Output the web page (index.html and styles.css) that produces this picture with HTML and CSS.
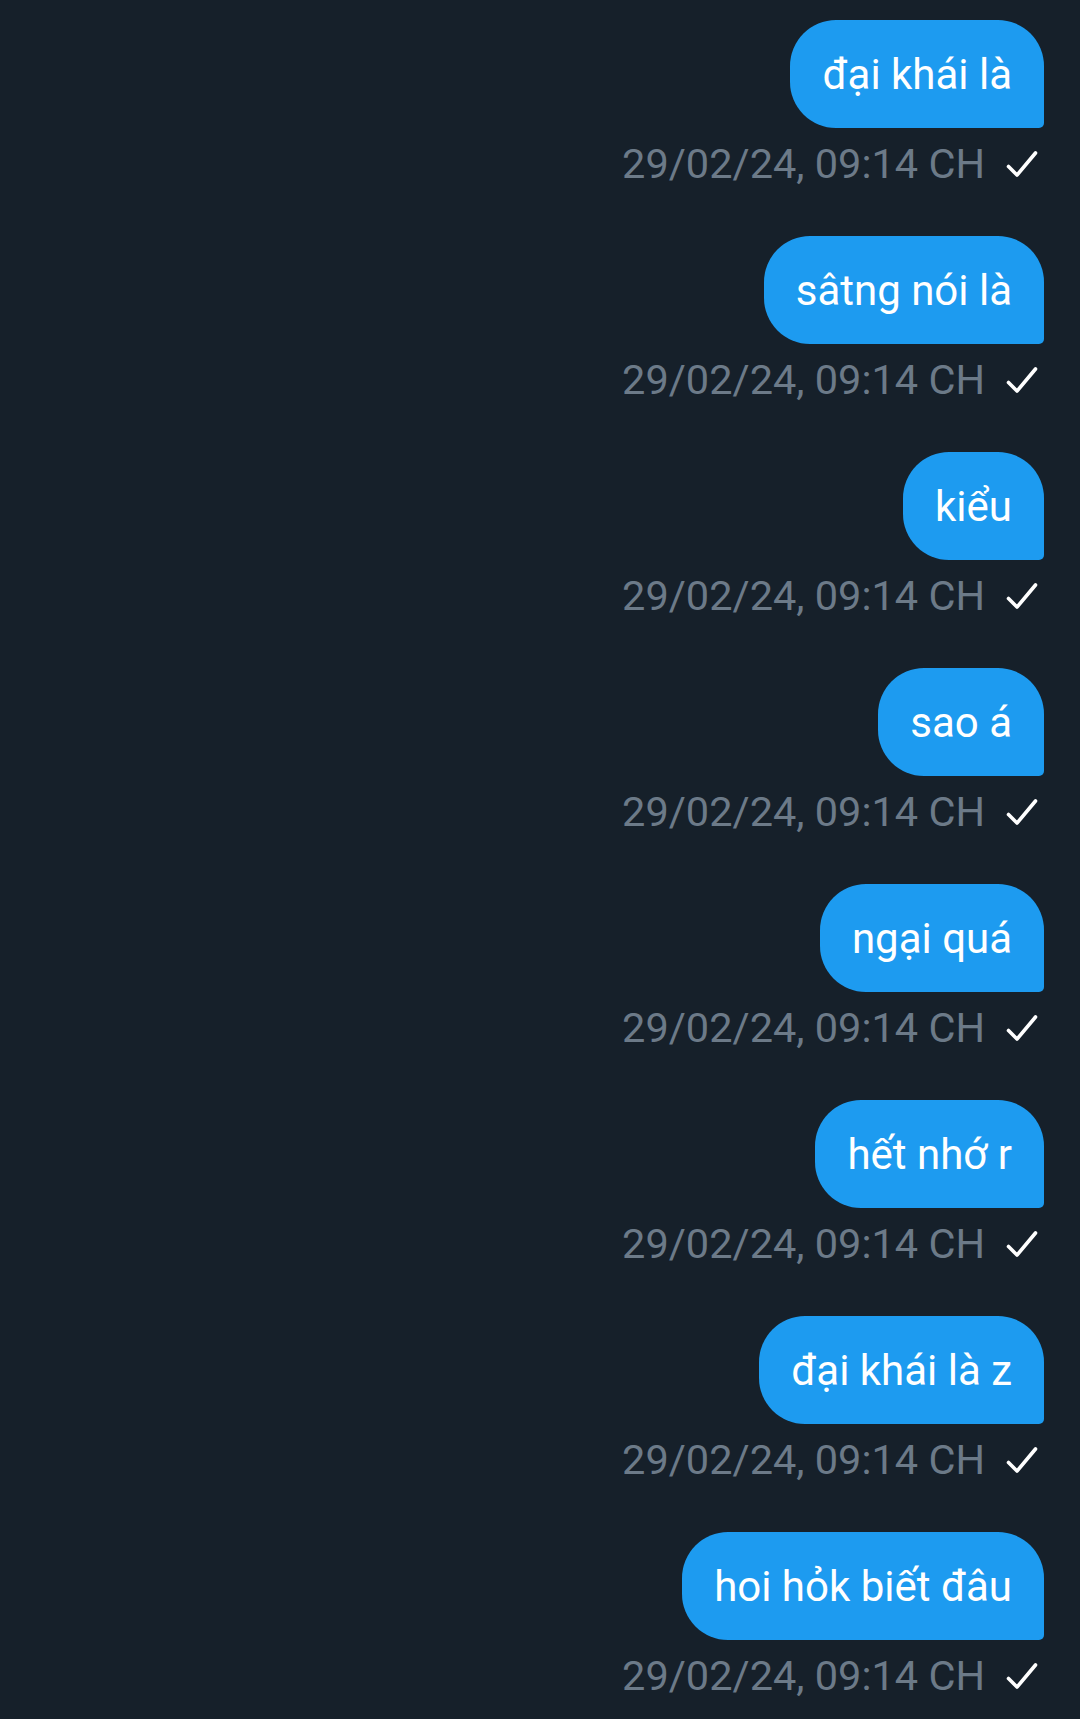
FILE: index.html
```html
<!DOCTYPE html>
<html lang="vi">
<head>
<meta charset="utf-8">
<link rel="stylesheet" href="styles.css">
</head>
<body>
<main class="chat">
  <div class="msg"><div class="bubble">đại khái là</div><div class="meta"><span>29/02/24, 09:14 CH</span><svg class="check" viewBox="0 0 32 28"><path d="M2.5 16.5 L11 25 L29.5 3"/></svg></div></div>
  <div class="msg"><div class="bubble">sâtng nói là</div><div class="meta"><span>29/02/24, 09:14 CH</span><svg class="check" viewBox="0 0 32 28"><path d="M2.5 16.5 L11 25 L29.5 3"/></svg></div></div>
  <div class="msg"><div class="bubble">kiểu</div><div class="meta"><span>29/02/24, 09:14 CH</span><svg class="check" viewBox="0 0 32 28"><path d="M2.5 16.5 L11 25 L29.5 3"/></svg></div></div>
  <div class="msg"><div class="bubble">sao á</div><div class="meta"><span>29/02/24, 09:14 CH</span><svg class="check" viewBox="0 0 32 28"><path d="M2.5 16.5 L11 25 L29.5 3"/></svg></div></div>
  <div class="msg"><div class="bubble">ngại quá</div><div class="meta"><span>29/02/24, 09:14 CH</span><svg class="check" viewBox="0 0 32 28"><path d="M2.5 16.5 L11 25 L29.5 3"/></svg></div></div>
  <div class="msg"><div class="bubble">hết nhớ r</div><div class="meta"><span>29/02/24, 09:14 CH</span><svg class="check" viewBox="0 0 32 28"><path d="M2.5 16.5 L11 25 L29.5 3"/></svg></div></div>
  <div class="msg"><div class="bubble">đại khái là z</div><div class="meta"><span>29/02/24, 09:14 CH</span><svg class="check" viewBox="0 0 32 28"><path d="M2.5 16.5 L11 25 L29.5 3"/></svg></div></div>
  <div class="msg"><div class="bubble">hoi hỏk biết đâu</div><div class="meta"><span>29/02/24, 09:14 CH</span><svg class="check" viewBox="0 0 32 28"><path d="M2.5 16.5 L11 25 L29.5 3"/></svg></div></div>
</main>
</body>
</html>
```
FILE: styles.css
```css
html, body {
  margin: 0;
  padding: 0;
  background: #16202a;
}
body {
  font-family: Roboto, "Noto Sans", sans-serif;
  height: 1719px;
  overflow: hidden;
}
.chat {
  display: flex;
  flex-direction: column;
  align-items: flex-end;
  padding: 20px 36px 0 0;
}
.msg {
  display: flex;
  flex-direction: column;
  align-items: flex-end;
  margin-bottom: 48px;
}
.bubble {
  background: #1d9bf0;
  color: #ffffff;
  font-size: 42px;
  line-height: 48px;
  padding: 31px 32px 29px 32px;
  border-radius: 46px 46px 5px 46px;
}
.meta {
  display: flex;
  align-items: center;
  margin-top: 12px;
  padding-right: 6px;
  color: #6c7a88;
  font-size: 41.5px;
  line-height: 48px;
}
.check {
  width: 32px;
  height: 28px;
  margin-left: 21px;
  fill: none;
  stroke: #ffffff;
  stroke-width: 3.6;
  stroke-linecap: round;
  stroke-linejoin: round;
}
```
